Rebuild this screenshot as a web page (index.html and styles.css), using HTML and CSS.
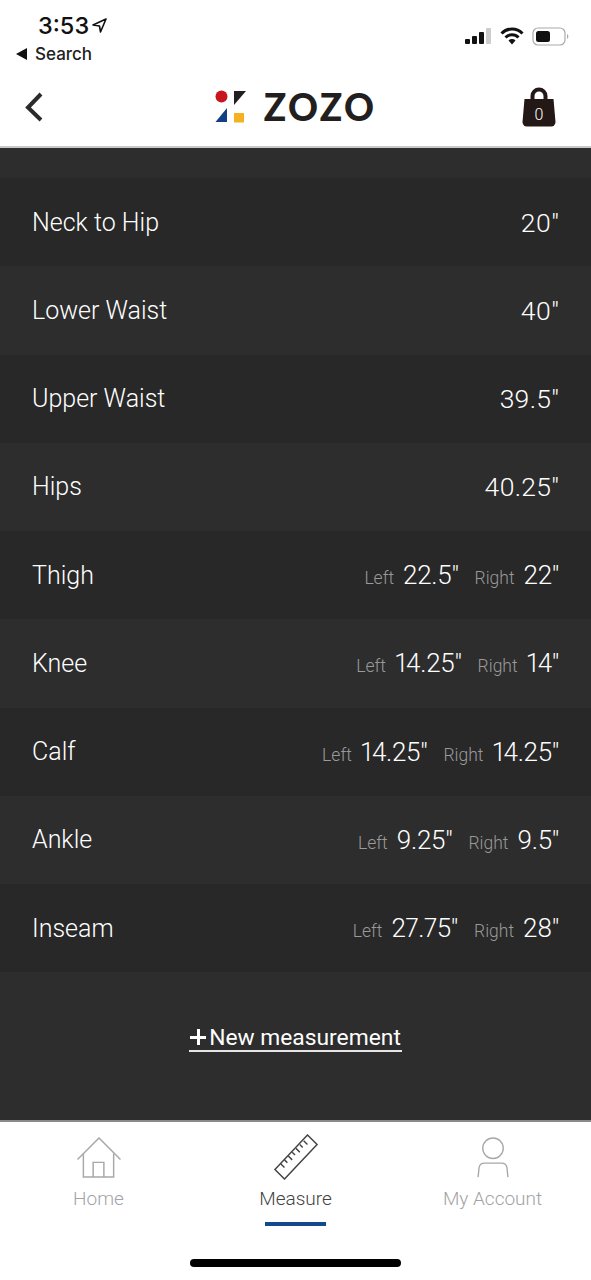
FILE: index.html
```html
<!DOCTYPE html>
<html lang="en">
<head>
    <meta charset="UTF-8">
    <meta name="viewport" content="width=device-width, initial-scale=1.0">
    <title>ZOZO measurements</title>
    <link rel="stylesheet" href="styles.css">
</head>
<body>
    <div class="status-bar">
        <div class="status-left">
            <div class="status-time">3:53
                <svg class="status-arrow" width="15" height="15" viewBox="0 0 15 15"><path d="M14 1 L1 7 L7.5 8 L8.5 14 Z" fill="none" stroke="#111" stroke-width="1.6" stroke-linejoin="round"/></svg>
            </div>
            <div class="status-back"><span class="back-triangle"></span>Search</div>
        </div>
        <div class="status-right">
            <svg width="27" height="18" viewBox="0 0 27 18">
                <rect x="0" y="12" width="5" height="5" rx="1" fill="#111"/>
                <rect x="7" y="9" width="5" height="8" rx="1" fill="#111"/>
                <rect x="14" y="5" width="5" height="12" rx="1" fill="#111"/>
                <rect x="21" y="1" width="5" height="16" rx="1" fill="#ccc"/>
            </svg>
            <svg width="24" height="18" viewBox="0 0 24 18">
                <path d="M1.500 6.500 A14.500 14.500 0 0 1 22.500 6.500" fill="none" stroke="#111" stroke-width="3"/>
                <path d="M5.500 10.500 A9 9 0 0 1 18.500 10.500" fill="none" stroke="#111" stroke-width="3"/>
                <path d="M8.500 13.500 L12 17.500 L15.500 13.500 A5 5 0 0 0 8.500 13.500 Z" fill="#111"/>
            </svg>
            <svg width="37" height="19" viewBox="0 0 37 19">
                <rect x="1" y="1" width="32" height="17" rx="5" fill="none" stroke="#aaa" stroke-width="1.2"/>
                <rect x="4" y="4" width="14" height="11" rx="2.5" fill="#111"/>
                <path d="M35 7 A3 3 0 0 1 35 12 Z" fill="#aaa"/>
            </svg>
        </div>
    </div>

    <header class="nav-bar">
        <svg class="nav-back" width="22" height="32" viewBox="0 0 22 32"><path d="M18 3 L5 16.500 L18 29" fill="none" stroke="#2b2b2b" stroke-width="4"/></svg>
        <div class="logo">
            <svg width="32" height="33" viewBox="0 0 32 33">
                <circle cx="6.500" cy="6.500" r="6" fill="#c8161e"/>
                <path d="M19 1 H31 L19 15 Z" fill="#231f20"/>
                <path d="M12 18 V32 H0.500 Z" fill="#123f85"/>
                <rect x="19" y="23" width="10" height="9.500" fill="#f4b223"/>
            </svg>
            <span class="logo-text">ZOZO</span>
        </div>
        <div class="bag">
            <svg width="34" height="40" viewBox="0 0 34 40">
                <path d="M10.500 14 V9 A6.500 6.500 0 0 1 23.500 9 V14" fill="none" stroke="#231815" stroke-width="4"/>
                <path d="M2.500 12 H31.500 L33.500 35 A4.500 4.500 0 0 1 29 39.500 H5 A4.500 4.500 0 0 1 0.500 35 Z" fill="#231815"/>
            </svg>
            <span class="bag-count">0</span>
        </div>
    </header>

    <main class="content">
        <div class="row"><span class="row-name">Neck to Hip</span><div class="row-values"><span class="value value-single">20"</span></div></div>
        <div class="row"><span class="row-name">Lower Waist</span><div class="row-values"><span class="value value-single">40"</span></div></div>
        <div class="row"><span class="row-name">Upper Waist</span><div class="row-values"><span class="value value-single">39.5"</span></div></div>
        <div class="row"><span class="row-name">Hips</span><div class="row-values"><span class="value value-single">40.25"</span></div></div>
        <div class="row"><span class="row-name">Thigh</span><div class="row-values"><span class="side">Left</span><span class="value">22.5"</span><span class="side">Right</span><span class="value">22"</span></div></div>
        <div class="row"><span class="row-name">Knee</span><div class="row-values"><span class="side">Left</span><span class="value">14.25"</span><span class="side">Right</span><span class="value">14"</span></div></div>
        <div class="row"><span class="row-name">Calf</span><div class="row-values"><span class="side">Left</span><span class="value">14.25"</span><span class="side">Right</span><span class="value">14.25"</span></div></div>
        <div class="row"><span class="row-name">Ankle</span><div class="row-values"><span class="side">Left</span><span class="value">9.25"</span><span class="side">Right</span><span class="value">9.5"</span></div></div>
        <div class="row"><span class="row-name">Inseam</span><div class="row-values"><span class="side">Left</span><span class="value">27.75"</span><span class="side">Right</span><span class="value">28"</span></div></div>
        <div class="new-wrap">
            <a class="new-link"><span class="plus"></span>New measurement</a>
        </div>
    </main>

    <nav class="tab-bar">
        <div class="tab">
            <svg width="46" height="41" viewBox="0 0 46 42" fill="none" stroke="#a8a8a8" stroke-width="1.500">
                <path d="M1 23 L23 1 L45 23"/>
                <path d="M7 17 V41 H38 V17"/>
                <path d="M17 41 V26 H28 V41"/>
            </svg>
            <span class="tab-label">Home</span>
        </div>
        <div class="tab tab-active">
            <svg class="measure-icon" width="46" height="46" viewBox="0 0 46 48" fill="none" stroke="#444" stroke-width="1.500">
                <path d="M1 37 L35 1 L45 11 L11 47 Z"/>
                <path d="M7 31 L11 35 M11 27 L14 30 M15 23 L19 27 M19 19 L22 22 M23 15 L27 19 M27 11 L30 14 M31 7 L35 11"/>
            </svg>
            <span class="tab-label">Measure</span>
            <span class="tab-marker"></span>
        </div>
        <div class="tab">
            <svg width="36" height="41" viewBox="0 0 36 44" fill="none" stroke="#a8a8a8" stroke-width="1.500">
                <circle cx="18" cy="12" r="11"/>
                <path d="M2 43 L3 33 A6 6 0 0 1 9 28 H27 A6 6 0 0 1 33 33 L34 43"/>
            </svg>
            <span class="tab-label">My Account</span>
        </div>
        <div class="home-indicator"></div>
    </nav>
</body>
</html>
```

FILE: styles.css
```css
html, body {
    margin: 0;
    padding: 0;
    width: 591px;
    height: 1280px;
    overflow: hidden;
}
body {
    display: flex;
    flex-direction: column;
    background-color: #fff;
    font-family: Roboto, "Liberation Sans", sans-serif;
}
.status-bar {
    height: 72px;
    box-sizing: border-box;
    display: flex;
    justify-content: space-between;
    padding: 12px 22px 0 16px;
}
.status-left {
    display: flex;
    flex-direction: column;
}
.status-time {
    display: flex;
    align-items: center;
    gap: 3px;
    padding-left: 22px;
    height: 26px;
    font-family: Inter, sans-serif;
    font-size: 23.500px;
    font-weight: 500;
    color: #111;
}
.status-back {
    display: flex;
    align-items: center;
    gap: 8px;
    margin-top: 6px;
    font-family: Inter, sans-serif;
    font-size: 17px;
    font-weight: 500;
    color: #222;
}
.back-triangle {
    width: 0;
    height: 0;
    border-top: 6px solid transparent;
    border-bottom: 6px solid transparent;
    border-right: 11px solid #111;
}
.status-right {
    display: flex;
    align-items: center;
    gap: 8px;
    height: 48px;
}
.nav-bar {
    height: 76px;
    box-sizing: border-box;
    display: grid;
    grid-template-columns: 1fr auto 1fr;
    align-items: center;
    padding: 0 35px 5px 35px;
    border-bottom: 2px solid #c9c9c9;
}
.nav-back {
    margin-left: -12px;
}
.logo {
    display: flex;
    align-items: center;
    gap: 17px;
}
.logo-text {
    font-family: Lato, sans-serif;
    font-size: 37px;
    font-weight: 900;
    letter-spacing: 2.300px;
    color: #231f20;
}
.bag {
    position: relative;
    justify-self: end;
    width: 34px;
    height: 40px;
}
.bag-count {
    position: absolute;
    left: 0;
    right: 0;
    bottom: 3px;
    text-align: center;
    font-size: 16px;
    font-weight: 300;
    color: #fff;
}
.content {
    height: 972px;
    box-sizing: border-box;
    padding-top: 30px;
    background-color: #2d2d2d;
}
.row {
    height: 88.25px;
    display: flex;
    align-items: center;
    justify-content: space-between;
    padding: 0 32px;
    color: #fff;
    font-size: 26px;
    font-weight: 300;
}
.row:nth-child(odd) {
    background-color: #282828;
}
.row-name {
    font-size: 25px;
}
.row-values {
    display: flex;
    align-items: baseline;
}
.side {
    margin-right: 9px;
    margin-left: 16px;
    font-size: 17.500px;
    color: #9a9a9a;
}
.value {
    letter-spacing: -0.3px;
    font-variant-numeric: proportional-nums;
}
.value-single {
    font-size: 26.500px;
    letter-spacing: 0.2px;
}
.new-wrap {
    display: flex;
    justify-content: center;
    padding-top: 52px;
}
.new-link {
    display: flex;
    align-items: center;
    gap: 3px;
    height: 26px;
    padding: 0 1px;
    border-bottom: 2px solid #e6e6e6;
    color: #fff;
    font-size: 22.800px;
    font-weight: 400;
}
.plus {
    position: relative;
    width: 16px;
    height: 3px;
    background-color: #fff;
}
.plus::after {
    content: "";
    position: absolute;
    left: 6.500px;
    top: -6.500px;
    width: 3px;
    height: 16px;
    background-color: #fff;
}
.tab-bar {
    position: relative;
    flex: 1;
    display: flex;
    box-sizing: border-box;
    border-top: 2px solid #8a8a8a;
    background-color: #fff;
}
.tab {
    position: relative;
    flex: 1;
    height: 110px;
    display: flex;
    flex-direction: column;
    align-items: center;
    justify-content: flex-end;
    padding-bottom: 22px;
    box-sizing: border-box;
    gap: 9px;
    color: #a3a3a3;
}
.tab-label {
    font-size: 19px;
    font-weight: 300;
}
.tab-active {
    color: #444;
}
.measure-icon {
    margin-bottom: -2px;
}
.tab-marker {
    position: absolute;
    top: 100px;
    width: 61px;
    height: 4px;
    background-color: #134a8c;
}
.home-indicator {
    position: absolute;
    left: 190px;
    top: 137px;
    width: 211px;
    height: 8px;
    border-radius: 4px;
    background-color: #000;
}
```
